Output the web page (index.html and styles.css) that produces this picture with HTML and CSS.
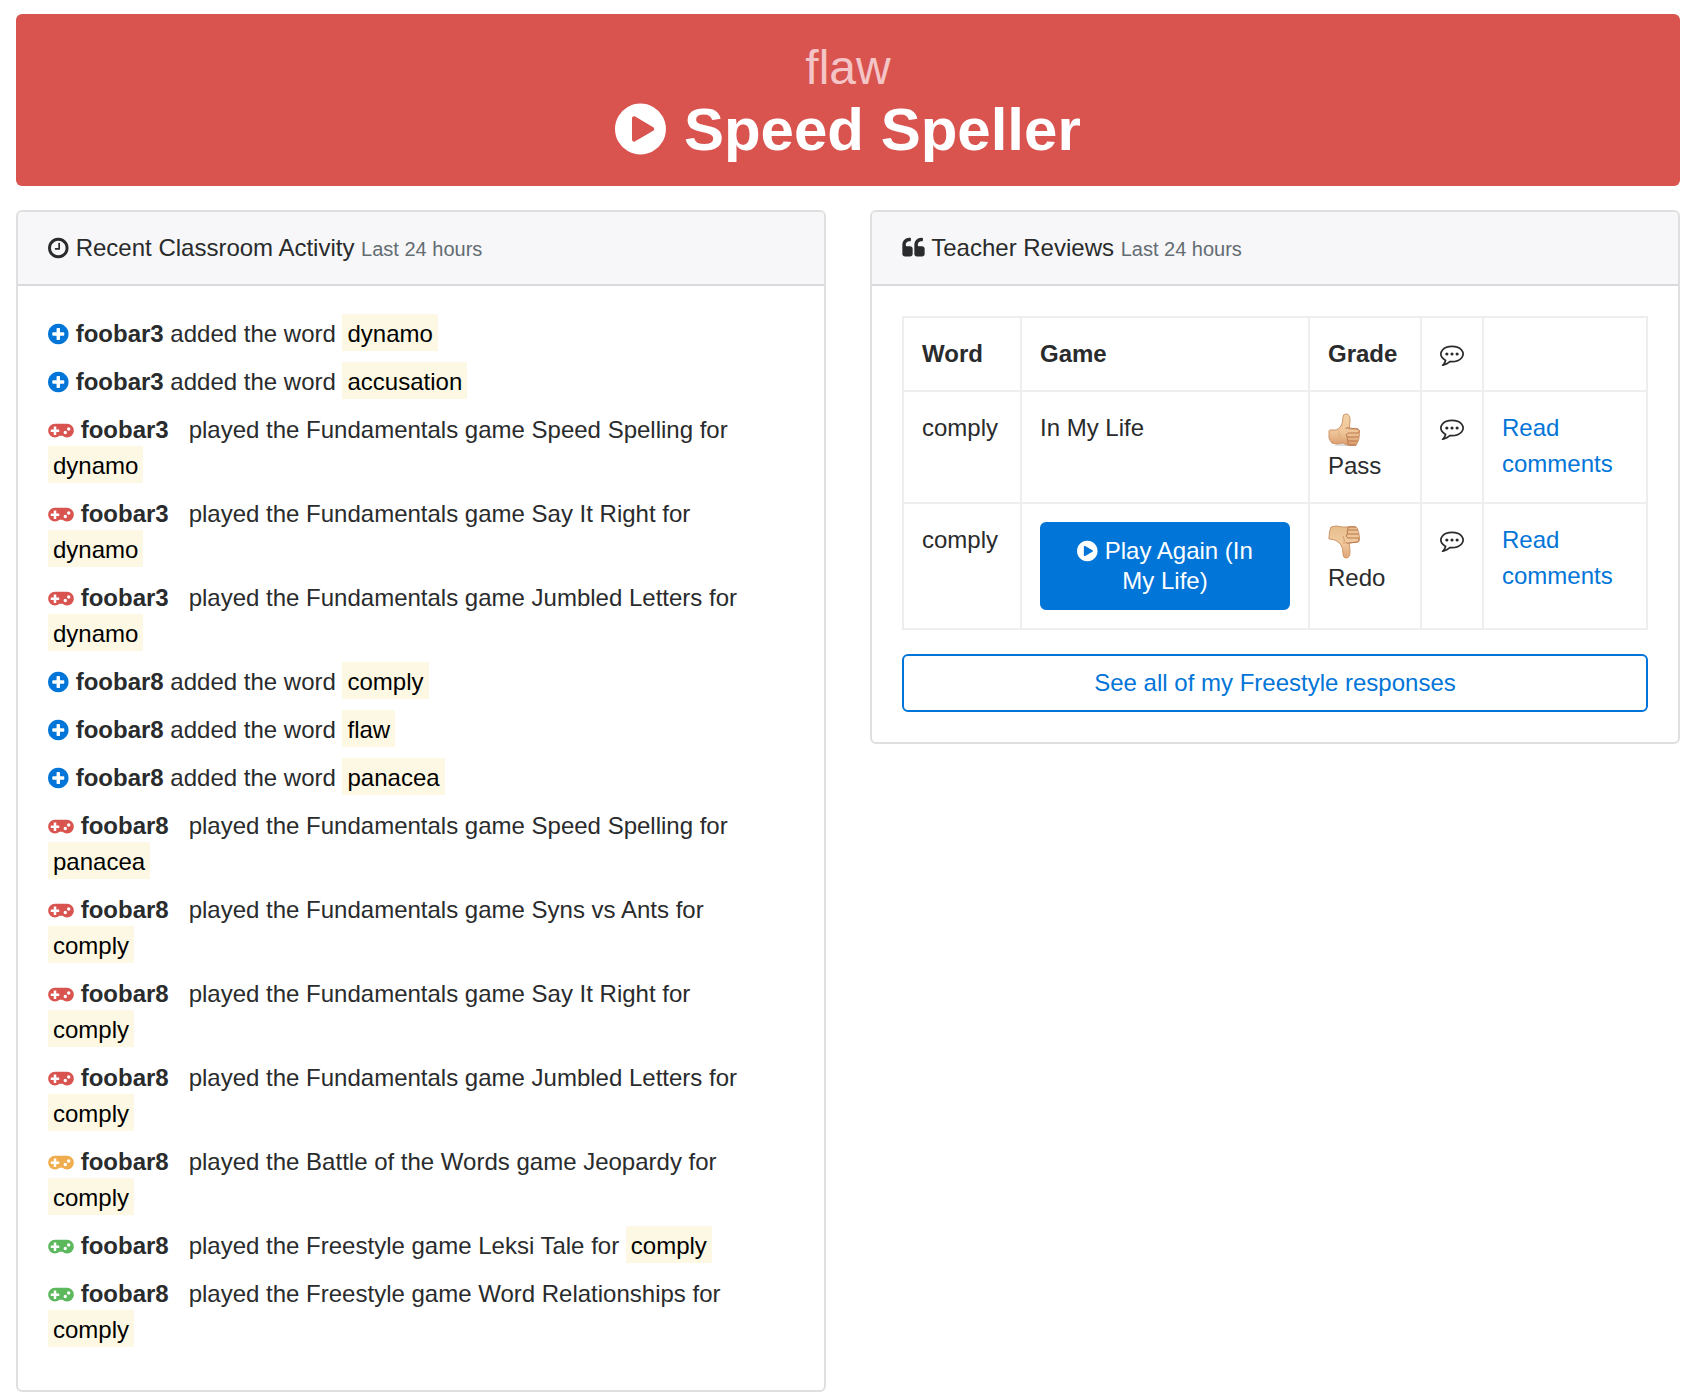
FILE: index.html
```html
<!DOCTYPE html>
<html lang="en">
<head>
<meta charset="utf-8">
<meta name="viewport" content="width=device-width, initial-scale=1">
<title>Speed Speller</title>
<link rel="stylesheet" href="styles.css">
</head>
<body>
<svg class="sprite" aria-hidden="true">
  <symbol id="play" viewBox="128 0 1568 1792"><path d="M896 128q209 0 385.500 103t279.500 279.500 103 385.500-103 385.500-279.500 279.500-385.500 103-385.500-103-279.500-279.500-103-385.500 103-385.500 279.500-279.500 385.500-103zm384 823q32-18 32-55t-32-55l-544-320q-31-19-64-1-32 19-32 55v640q0 36 32 55 16 8 32 8 17 0 32-9z"/></symbol>
  <symbol id="plus" viewBox="128 0 1568 1792"><path d="M1344 960v-128q0-26-19-45t-45-19h-256v-256q0-26-19-45t-45-19h-128q-26 0-45 19t-19 45v256h-256q-26 0-45 19t-19 45v128q0 26 19 45t45 19h256v256q0 26 19 45t45 19h128q26 0 45-19t19-45v-256h256q26 0 45-19t19-45zm320-64q0 209-103 385.500t-279.500 279.500-385.500 103-385.500-103-279.500-279.500-103-385.500 103-385.500 279.500-279.500 385.500-103 385.500 103 279.500 279.500 103 385.500z"/></symbol>
  <symbol id="clock" viewBox="128 0 1568 1792"><path d="M1024 544v448q0 14-9 23t-23 9h-320q-14 0-23-9t-9-23v-64q0-14 9-23t23-9h224v-352q0-14 9-23t23-9h64q14 0 23 9t9 23zm416 352q0-148-73-273t-198-198-273-73-273 73-198 198-73 273 73 273 198 198 273 73 273-73 198-198 73-273zm224 0q0 209-103 385.500t-279.500 279.500-385.500 103-385.500-103-279.500-279.500-103-385.500 103-385.500 279.500-279.500 385.500-103 385.500 103 279.500 279.500 103 385.500z"/></symbol>
  <symbol id="quote" viewBox="38 0 1716 1792"><path d="M832 960v384q0 80-56 136t-136 56h-384q-80 0-136-56t-56-136v-704q0-104 40.500-198.500t109.500-163.500 163.500-109.500 198.500-40.500h64q26 0 45 19t19 45v128q0 26-19 45t-45 19h-64q-106 0-181 75t-75 181v32q0 40 28 68t68 28h224q80 0 136 56t56 136zm896 0v384q0 80-56 136t-136 56h-384q-80 0-136-56t-56-136v-704q0-104 40.500-198.500t109.500-163.500 163.500-109.500 198.500-40.500h64q26 0 45 19t19 45v128q0 26-19 45t-45 19h-64q-106 0-181 75t-75 181v32q0 40 28 68t68 28h224q80 0 136 56t56 136z"/></symbol>
  <symbol id="pad" viewBox="0 -512 1920 1792"><path fill-rule="evenodd" d="M512 0h896a512 512 0 0 1 0 1024q-192 0-338-128h-220q-146 128-338 128a512 512 0 0 1 0-1024zM832 576v-128q0-32-32-32h-192v-192q0-32-32-32h-128q-32 0-32 32v192h-192q-32 0-32 32v128q0 32 32 32h192v192q0 32 32 32h128q32 0 32-32v-192h192q32 0 32-32zM1408 640a128 128 0 1 0-256 0a128 128 0 1 0 256 0zM1664 384a128 128 0 1 0-256 0a128 128 0 1 0 256 0z"/></symbol>
  <symbol id="comment" viewBox="0 0 1792 1792"><circle cx="512" cy="896" r="118"/><circle cx="896" cy="896" r="118"/><circle cx="1280" cy="896" r="118"/><path d="M896 384q-204 0-381.500 69.500t-282 187.500-104.500 255q0 112 71.500 213.500t201.500 175.500l87 50-27 96q-24 91-70 172 152-63 275-171l43-38 57 6q69 8 130 8 204 0 381.500-69.500t282-187.500 104.500-255-104.500-255-282-187.500-381.500-69.500zm896 512q0 174-120 321.500t-326 233-450 85.500q-70 0-145-8-198 175-460 242-49 14-114 22h-5q-15 0-27-10.500t-16-27.500v-1q-3-4-.5-12t2-10 4.500-9.500l6-9 7-8.500 8-9q7-8 31-34.500t34.500-38 31-39.500 32.500-51 27-59 26-76q-157-89-247.500-220t-90.500-281q0-174 120-321.500t326-233 450-85.500 450 85.500 326 233 120 321.500z"/></symbol>
  <linearGradient id="skin" x1="0" y1="0" x2="0" y2="1"><stop offset="0" stop-color="#f4d3a6"/><stop offset=".6" stop-color="#eec498"/><stop offset="1" stop-color="#d99b6c"/></linearGradient>
  <linearGradient id="skin-down" x1="0" y1="0" x2="0" y2="1"><stop offset="0" stop-color="#e6bd8c"/><stop offset=".5" stop-color="#f1cba0"/><stop offset="1" stop-color="#dfa778"/></linearGradient>
</svg>

<a class="banner" href="#play-game">
  <span class="banner-word">flaw</span>
  <span class="banner-title"><svg class="icon icon-xl"><use href="#play"/></svg> Speed Speller</span>
</a>

<main class="columns">
  <section class="card">
    <h2 class="card-header"><svg class="icon"><use href="#clock"/></svg> Recent Classroom Activity <small>Last 24 hours</small></h2>
    <div class="card-body">
      <ul class="activity">
        <li><svg class="icon blue"><use href="#plus"/></svg> <strong>foobar3</strong> added the word <mark>dynamo</mark></li>
        <li><svg class="icon blue"><use href="#plus"/></svg> <strong>foobar3</strong> added the word <mark>accusation</mark></li>
        <li><svg class="icon icon-pad red"><use href="#pad"/></svg> <strong>foobar3</strong> &nbsp; played the Fundamentals game Speed Spelling for <mark>dynamo</mark></li>
        <li><svg class="icon icon-pad red"><use href="#pad"/></svg> <strong>foobar3</strong> &nbsp; played the Fundamentals game Say It Right for <mark>dynamo</mark></li>
        <li><svg class="icon icon-pad red"><use href="#pad"/></svg> <strong>foobar3</strong> &nbsp; played the Fundamentals game Jumbled Letters for <mark>dynamo</mark></li>
        <li><svg class="icon blue"><use href="#plus"/></svg> <strong>foobar8</strong> added the word <mark>comply</mark></li>
        <li><svg class="icon blue"><use href="#plus"/></svg> <strong>foobar8</strong> added the word <mark>flaw</mark></li>
        <li><svg class="icon blue"><use href="#plus"/></svg> <strong>foobar8</strong> added the word <mark>panacea</mark></li>
        <li><svg class="icon icon-pad red"><use href="#pad"/></svg> <strong>foobar8</strong> &nbsp; played the Fundamentals game Speed Spelling for <mark>panacea</mark></li>
        <li><svg class="icon icon-pad red"><use href="#pad"/></svg> <strong>foobar8</strong> &nbsp; played the Fundamentals game Syns vs Ants for <mark>comply</mark></li>
        <li><svg class="icon icon-pad red"><use href="#pad"/></svg> <strong>foobar8</strong> &nbsp; played the Fundamentals game Say It Right for <mark>comply</mark></li>
        <li><svg class="icon icon-pad red"><use href="#pad"/></svg> <strong>foobar8</strong> &nbsp; played the Fundamentals game Jumbled Letters for <mark>comply</mark></li>
        <li><svg class="icon icon-pad orange"><use href="#pad"/></svg> <strong>foobar8</strong> &nbsp; played the Battle of the Words game Jeopardy for <mark>comply</mark></li>
        <li><svg class="icon icon-pad green"><use href="#pad"/></svg> <strong>foobar8</strong> &nbsp; played the Freestyle game Leksi Tale for <mark>comply</mark></li>
        <li><svg class="icon icon-pad green"><use href="#pad"/></svg> <strong>foobar8</strong> &nbsp; played the Freestyle game Word Relationships for <mark>comply</mark></li>
      </ul>
    </div>
  </section>

  <section class="card">
    <h2 class="card-header"><svg class="icon icon-quote"><use href="#quote"/></svg> Teacher Reviews <small>Last 24 hours</small></h2>
    <div class="card-body">
      <table class="reviews">
        <thead>
          <tr>
            <th class="col-word" scope="col">Word</th>
            <th scope="col">Game</th>
            <th class="col-grade" scope="col">Grade</th>
            <th class="col-icon" scope="col" aria-label="Comments"><svg class="icon icon-comment"><use href="#comment"/></svg></th>
            <td class="col-link"></td>
          </tr>
        </thead>
        <tbody>
          <tr>
            <td>comply</td>
            <td>In My Life</td>
            <td>
              <svg class="thumb" viewBox="0 0 32 38" role="img" aria-label="Thumbs up">
                <ellipse cx="18" cy="35" rx="12" ry="1" fill="#000" opacity=".15"/>
                <path d="M1 21q0-1 2-1h5q3-1 5-4 2-3 2-9 0-3 3-3 4 0 4 6 0 5-1 9l9 0q2 1 1 4 1 2 0 4 0 3-1 4-1 3-2 4-4 1-9 0l-4-2q-6 2-11 0-2-2-3-5z" fill="url(#skin)" stroke="#cf9668"/>
                <path d="M18 19q0-2 3-1l9 1q2 1 1 4H20M20 23q-3 1-1 4h12M20 27q-2 2 0 4h10M20 31q-1 3 1 4h7" fill="none" stroke="#b9794d"/>
                <path d="M11 21q-1 4 2 7" fill="none" stroke="#dca878"/>
              </svg>
              Pass
            </td>
            <td><svg class="icon icon-comment" role="img" aria-label="Has comments"><use href="#comment"/></svg></td>
            <td><a href="#comments-1">Read comments</a></td>
          </tr>
          <tr>
            <td>comply</td>
            <td><button class="btn btn-primary" type="button"><svg class="icon"><use href="#play"/></svg> Play Again (In My Life)</button></td>
            <td>
              <svg class="thumb" viewBox="0 0 32 38" role="img" aria-label="Thumbs down">
                <path d="M1 16q0-7 2-11 5-2 11 0l5 0q5-1 9 0 2 1 2 4 1 1 1 4 1 2 0 4 0 3-2 3l-8 1q1 4 1 9 0 6-4 6-3 0-3-4 0-6-2-9-2-3-6-5l-5-1q-2 0-1-1z" fill="url(#skin-down)" stroke="#cf9668"/>
                <path d="M18 20q0 2 3 1l9-1q2-1 1-4H20M20 16q-3-1-1-4h12M20 12q-2-2 0-4h10M20 8q-1-3 1-3h7" fill="none" stroke="#b9794d"/>
                <path d="M15 14q2 4 1 8" fill="none" stroke="#d79a6c"/>
              </svg>
              Redo
            </td>
            <td><svg class="icon icon-comment" role="img" aria-label="Has comments"><use href="#comment"/></svg></td>
            <td><a href="#comments-2">Read comments</a></td>
          </tr>
        </tbody>
      </table>
      <button class="btn btn-outline" type="button">See all of my Freestyle responses</button>
    </div>
  </section>
</main>
</body>
</html>
```

FILE: styles.css
```css
*,
*::before,
*::after {
  box-sizing: border-box;
}

body {
  margin: 0;
  padding: 14px 16px 6px;
  background: #fff;
  color: #292b2c;
  font-family: "Helvetica Neue", "Liberation Sans", Arial, sans-serif;
  font-size: 24px;
  line-height: 36px;
}

a {
  color: #0275d8;
  text-decoration: none;
}

.sprite {
  position: absolute;
  width: 0;
  height: 0;
}

.icon {
  width: 21px;
  height: 24px;
  fill: currentColor;
  vertical-align: -4px;
}

.icon-xl {
  width: 52px;
  height: 60px;
  vertical-align: -9px;
}

.icon-pad {
  width: 26px;
  vertical-align: -3px;
}

.icon-quote {
  width: 23px;
}

.icon-comment {
  width: 24px;
}

.blue { color: #0275d8; }
.red { color: #d9534f; }
.orange { color: #f0ad4e; }
.green { color: #5cb85c; }

.banner {
  display: block;
  margin-bottom: 24px;
  padding: 27px 24px 21px;
  border-radius: 6px;
  background: #d9534f;
  color: #fff;
  text-align: center;
}

.banner-word,
.banner-title {
  display: block;
}

.banner-word {
  color: #f4c5c6;
  font-size: 48px;
  line-height: 54px;
}

.banner-title {
  font-size: 60px;
  font-weight: bold;
  line-height: 70px;
}

.columns {
  display: grid;
  grid-template-columns: repeat(2, minmax(0, 1fr));
  align-items: start;
  gap: 44px;
}

.card {
  border: 2px solid #dfdfdf;
  border-radius: 6px;
}

.card-header {
  margin: 0;
  padding: 18px 30px;
  border-bottom: 2px solid #d9dadb;
  border-radius: 4px 4px 0 0;
  background: #f7f7f9;
  font-size: 24px;
  font-weight: normal;
}

.card-header small {
  color: #636c72;
  font-size: 20px;
  line-height: 1;
}

.card-body {
  padding: 30px;
}

.activity {
  margin: 0;
  padding: 0 24px 0 0;
  list-style: none;
}

.activity li {
  margin-bottom: 12px;
}

.activity li:last-child {
  margin-bottom: 0;
  padding-bottom: 12px;
}

mark {
  padding: 6px 5px 4px;
  background: #fcf8e3;
  color: #000;
}

.reviews {
  width: 100%;
  margin-bottom: 24px;
  border-collapse: collapse;
  table-layout: fixed;
}

.reviews th,
.reviews td {
  padding: 18px;
  border: 2px solid #eceeef;
  text-align: left;
  vertical-align: top;
}

.reviews .col-word { width: 118px; }
.reviews .col-grade { width: 112px; }
.reviews .col-icon { width: 62px; }
.reviews .col-link { width: 164px; }

.thumb {
  display: block;
  width: 32px;
  height: 38px;
}

.btn {
  display: block;
  width: 100%;
  padding: 12px 24px;
  border: 2px solid #0275d8;
  border-radius: 6px;
  font: inherit;
  line-height: 30px;
  text-align: center;
  cursor: pointer;
}

.btn-primary {
  background: #0275d8;
  color: #fff;
}

.btn-outline {
  background: transparent;
  color: #0275d8;
}
```
